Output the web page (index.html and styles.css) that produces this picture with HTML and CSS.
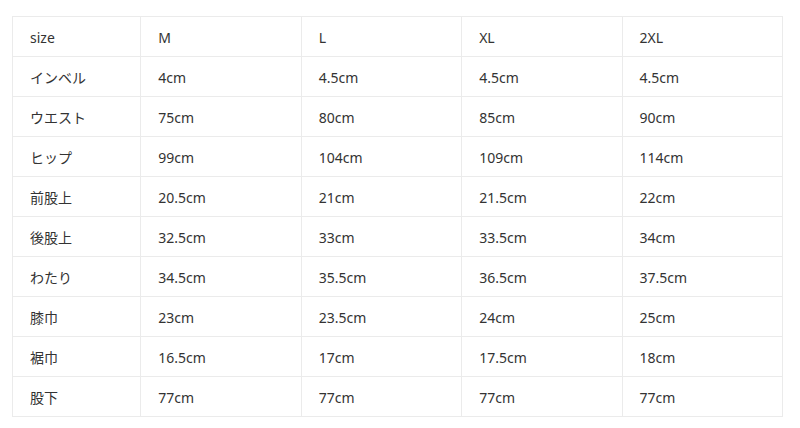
FILE: index.html
```html
<!DOCTYPE html>
<html lang="ja">
<head>
<meta charset="utf-8">
<link rel="stylesheet" href="styles.css">
</head>
<body>
<table class="size-table">
  <colgroup><col class="c0"><col class="c"><col class="c"><col class="c"><col class="c"></colgroup>
  <tr><td>size</td><td>M</td><td>L</td><td>XL</td><td>2XL</td></tr>
  <tr><td>インベル</td><td>4cm</td><td>4.5cm</td><td>4.5cm</td><td>4.5cm</td></tr>
  <tr><td>ウエスト</td><td>75cm</td><td>80cm</td><td>85cm</td><td>90cm</td></tr>
  <tr><td>ヒップ</td><td>99cm</td><td>104cm</td><td>109cm</td><td>114cm</td></tr>
  <tr><td>前股上</td><td>20.5cm</td><td>21cm</td><td>21.5cm</td><td>22cm</td></tr>
  <tr><td>後股上</td><td>32.5cm</td><td>33cm</td><td>33.5cm</td><td>34cm</td></tr>
  <tr><td>わたり</td><td>34.5cm</td><td>35.5cm</td><td>36.5cm</td><td>37.5cm</td></tr>
  <tr><td>膝巾</td><td>23cm</td><td>23.5cm</td><td>24cm</td><td>25cm</td></tr>
  <tr><td>裾巾</td><td>16.5cm</td><td>17cm</td><td>17.5cm</td><td>18cm</td></tr>
  <tr><td>股下</td><td>77cm</td><td>77cm</td><td>77cm</td><td>77cm</td></tr>
</table>
</body>
</html>
```
FILE: styles.css
```css
html, body { margin: 0; padding: 0; background: #fff; }
body {
  padding: 16px 0 0 12px;
  font-family: "Noto Sans", "Noto Sans CJK JP", sans-serif;
  font-size: 14px;
  line-height: 20px;
  color: #333;
}
.size-table {
  border-collapse: collapse;
  table-layout: fixed;
  width: 771px;
}
.c0 { width: 128px; }
.c { width: 160px; }
.size-table tr { height: 40px; }
.size-table td {
  box-sizing: border-box;
  height: 40px;
  padding: 2px 0 0 17px;
  border: 1px solid #ebebeb;
  vertical-align: middle;
  white-space: nowrap;
}
```
